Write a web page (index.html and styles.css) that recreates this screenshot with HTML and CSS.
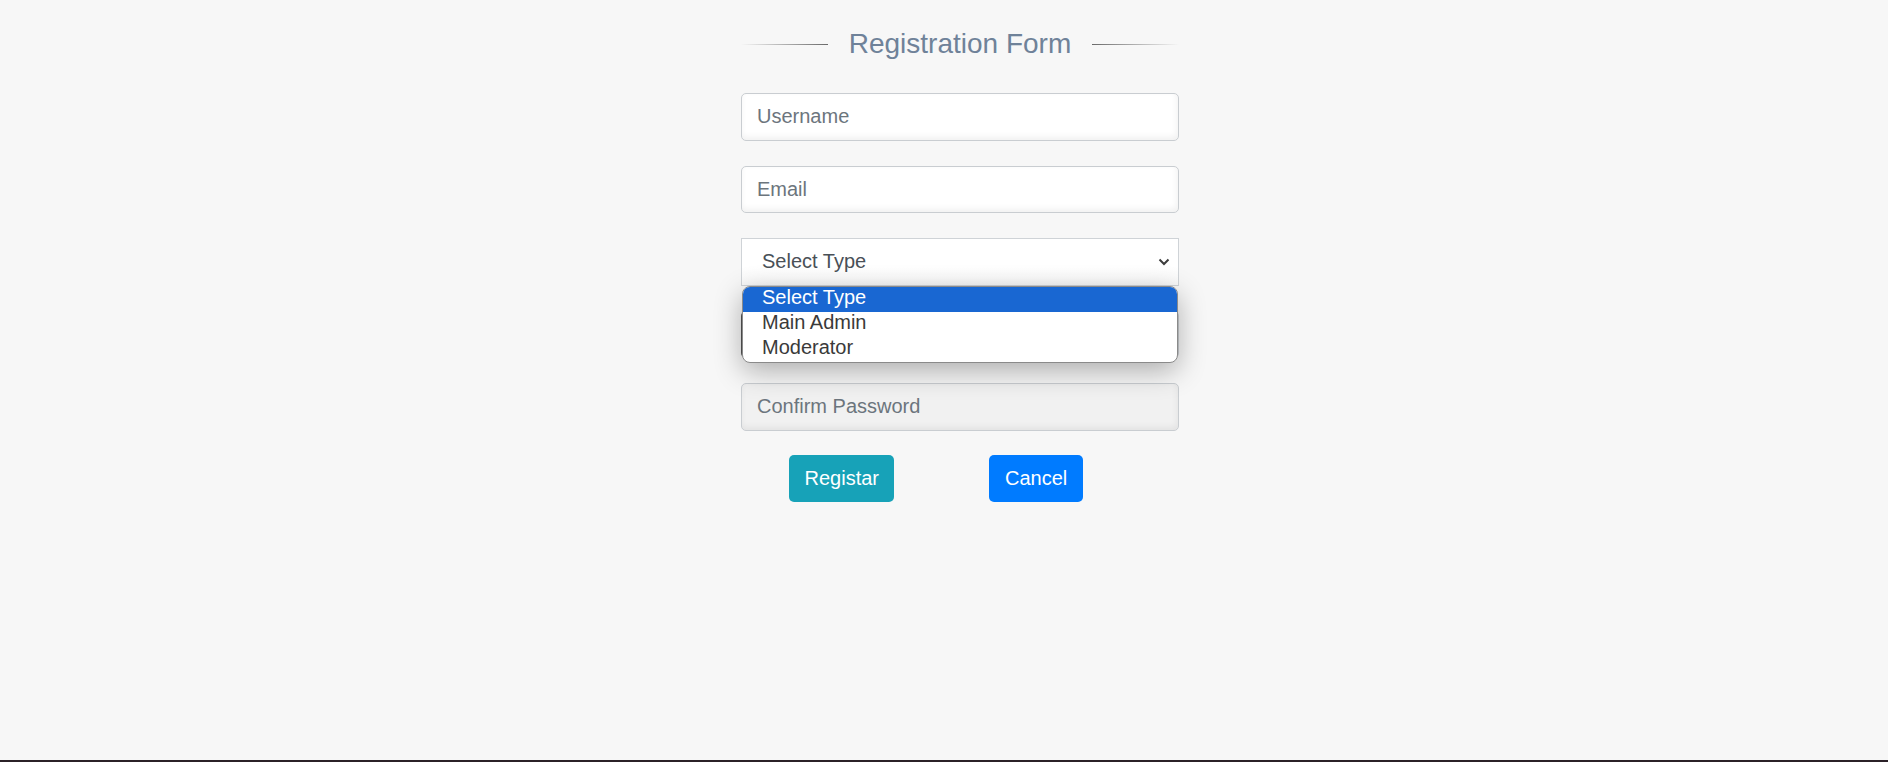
FILE: index.html
```html
<!DOCTYPE html>
<html lang="en">
<head>
<meta charset="utf-8">
<title>Registration Form</title>
<link rel="stylesheet" href="styles.css">
</head>
<body>
<div class="page">
  <form class="form">
    <div class="title">
      <span class="line line-left"></span>
      <h2 class="title-text">Registration Form</h2>
      <span class="line line-right"></span>
    </div>
    <div class="fields">
      <input class="field" type="text" placeholder="Username">
      <input class="field" type="email" placeholder="Email">
      <div class="select-wrap">
        <div class="select">
          <span>Select Type</span>
          <svg class="chev" width="12" height="8" viewBox="0 0 12 8"><polyline points="1.5,1.5 6,6 10.5,1.5" fill="none" stroke="#3c3c3c" stroke-width="2"/></svg>
        </div>
        <ul class="listbox">
          <li class="opt opt-selected">Select Type</li>
          <li class="opt">Main Admin</li>
          <li class="opt">Moderator</li>
        </ul>
      </div>
      <input class="field field-password" type="password" placeholder="Password">
      <input class="field field-confirm" type="password" placeholder="Confirm Password">
    </div>
    <div class="actions">
      <button type="button" class="btn btn-info">Registar</button>
      <button type="button" class="btn btn-primary">Cancel</button>
    </div>
  </form>
</div>
<div class="bottom-bar"></div>
</body>
</html>
```

FILE: styles.css
```css
* { box-sizing: border-box; }
html, body { margin: 0; padding: 0; }
body {
  background: #f7f7f7;
  font-family: "Liberation Sans", Arial, sans-serif;
  height: 762px;
  overflow: hidden;
  display: flex;
  flex-direction: column;
}
.page {
  flex: 1;
  display: flex;
  justify-content: center;
  padding-left: 32px;
}
.form {
  width: 438px;
  display: flex;
  flex-direction: column;
}
.title {
  display: flex;
  align-items: center;
  gap: 21px;
  margin-top: 27px;
  height: 34px;
}
.title-text {
  margin: 0;
  font-weight: normal;
  font-size: 28px;
  line-height: 34px;
  color: #6f8299;
  white-space: nowrap;
}
.line {
  flex: 1;
  height: 1px;
}
.line-left { background: linear-gradient(to right, rgba(120,120,120,0), #6a6a6a); }
.line-right { background: linear-gradient(to right, #6a6a6a, rgba(120,120,120,0)); }
.fields {
  margin-top: 32px;
  display: flex;
  flex-direction: column;
  gap: 25px;
}
.field {
  display: block;
  width: 100%;
  height: 47.5px;
  margin: 0;
  padding: 0 15px;
  font-family: inherit;
  font-size: 20px;
  color: #495057;
  background: #fff;
  border: 1px solid #c9cdd1;
  border-radius: 5px;
  box-shadow: inset -1px -3px 6px rgba(0,0,0,0.06);
  outline: none;
}
.field::placeholder { color: #6c757d; }
.field-password { border-left-color: #555; }
.field-confirm {
  background: #f1f1f1;
}
.select-wrap {
  position: relative;
  z-index: 2;
}
.select {
  height: 47.5px;
  display: flex;
  align-items: center;
  justify-content: space-between;
  padding: 0 8px 0 20px;
  font-size: 20px;
  color: #495057;
  background: linear-gradient(#fff 60%, #f8f8f8);
  border: 1px solid #cfd3d7;
}
.chev { display: block; }
.listbox {
  position: absolute;
  top: 100%;
  left: 1px;
  right: 1px;
  margin: 0;
  padding: 0;
  list-style: none;
  background: #fff;
  border: 1px solid #8a8a8a;
  border-radius: 8px;
  overflow: hidden;
  box-shadow: 0 8px 28px rgba(0,0,0,0.3);
}
.opt {
  height: 25px;
  line-height: 21px;
  padding-left: 19px;
  font-size: 20px;
  color: #3a3a3a;
}
.opt-selected {
  background: #1967d2;
  color: #fff;
}
.actions {
  display: flex;
  margin-top: 24.5px;
  padding-left: 48px;
  gap: 95px;
}
.btn {
  height: 47px;
  padding: 0 15.5px;
  border: none;
  border-radius: 5px;
  font-family: inherit;
  font-size: 20px;
  color: #fff;
  cursor: pointer;
}
.btn-info { background: #17a2b8; }
.btn-primary { background: #007bff; }
.bottom-bar {
  height: 2px;
  background: #2b2127;
}
```
